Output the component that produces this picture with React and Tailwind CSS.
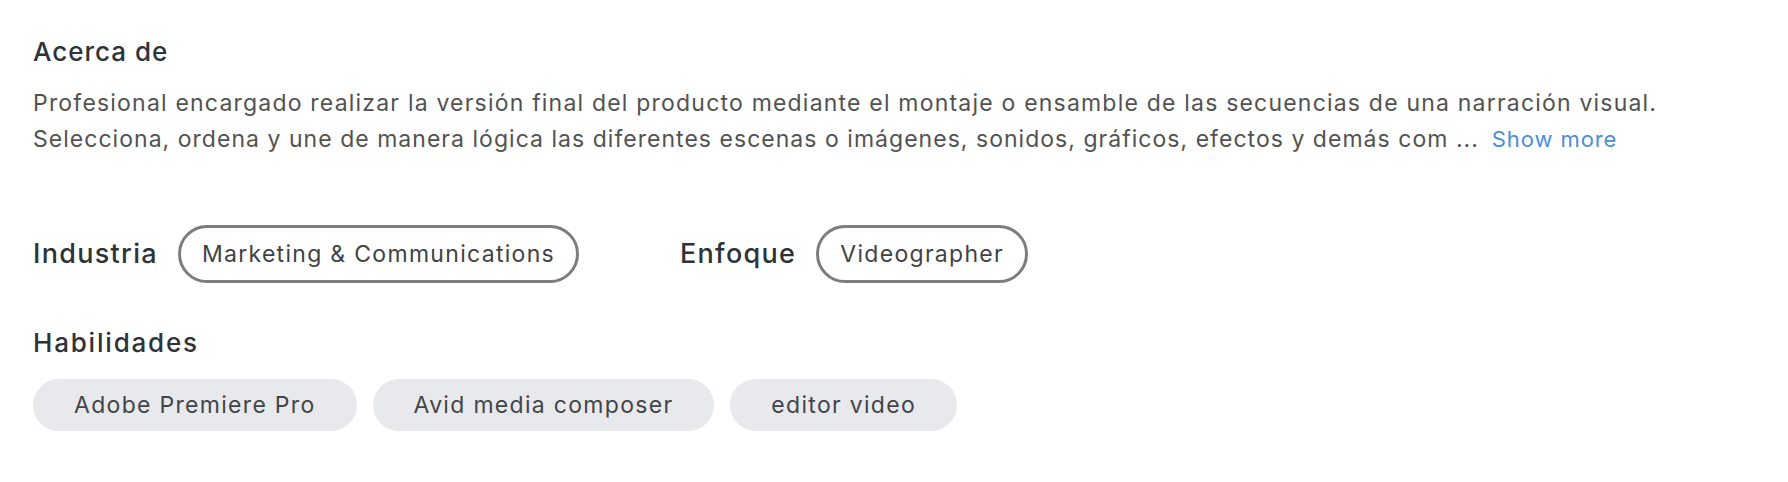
const skills = ['Adobe Premiere Pro', 'Avid media composer', 'editor video'];

const font = { fontFamily: 'Inter, "Noto Sans", sans-serif' };

export default function App() {
  return (
    <div className="min-h-screen bg-white pl-[33px] pt-[36px]" style={font}>
      {/* Acerca de */}
      <h2 className="text-[26px] leading-[32px] font-medium tracking-[1px] text-[#2e3338]">Acerca de</h2>
      <p className="mt-[17px] text-[23px] leading-[36px] tracking-[1.2px] text-[#525252]">
        Profesional encargado realizar la versión final del producto mediante el montaje o ensamble de las secuencias de una narración visual.
        <br />
        <span className="tracking-[1.03px]">
          Selecciona, ordena y une de manera lógica las diferentes escenas o imágenes, sonidos, gráficos, efectos y demás com ...
        </span>
        <button className="ml-[13px] text-[22px] tracking-[0.9px] text-[#4a8fd6]">Show more</button>
      </p>

      {/* Industria / Enfoque */}
      <div className="mt-[68px] flex items-center gap-[101px]">
        <div className="flex items-center gap-[20px]">
          <span className="text-[27px] font-medium tracking-[1.3px] text-[#2e3338]">Industria</span>
          <span className="rounded-full border-[3px] border-[#7d7d7d] px-[21px] h-[58px] flex items-center text-[23px] tracking-[1.3px] text-[#3f4246]">
            Marketing &amp; Communications
          </span>
        </div>
        <div className="flex items-center gap-[20px]">
          <span className="text-[27px] font-medium tracking-[1.3px] text-[#2e3338]">Enfoque</span>
          <span className="rounded-full border-[3px] border-[#7d7d7d] px-[21px] h-[58px] flex items-center text-[23px] tracking-[1.3px] text-[#3f4246]">
            Videographer
          </span>
        </div>
      </div>

      {/* Habilidades */}
      <h3 className="mt-[44px] text-[26px] leading-[32px] font-medium tracking-[1.8px] text-[#2e3338]">Habilidades</h3>
      <div className="mt-[20px] flex gap-[16px]">
        {skills.map((s) => (
          <span
            key={s}
            className="rounded-full bg-[#e8e9ec] h-[52px] px-[41px] flex items-center text-[23px] tracking-[1.3px] text-[#424548]"
          >
            {s}
          </span>
        ))}
      </div>
    </div>
  );
}
